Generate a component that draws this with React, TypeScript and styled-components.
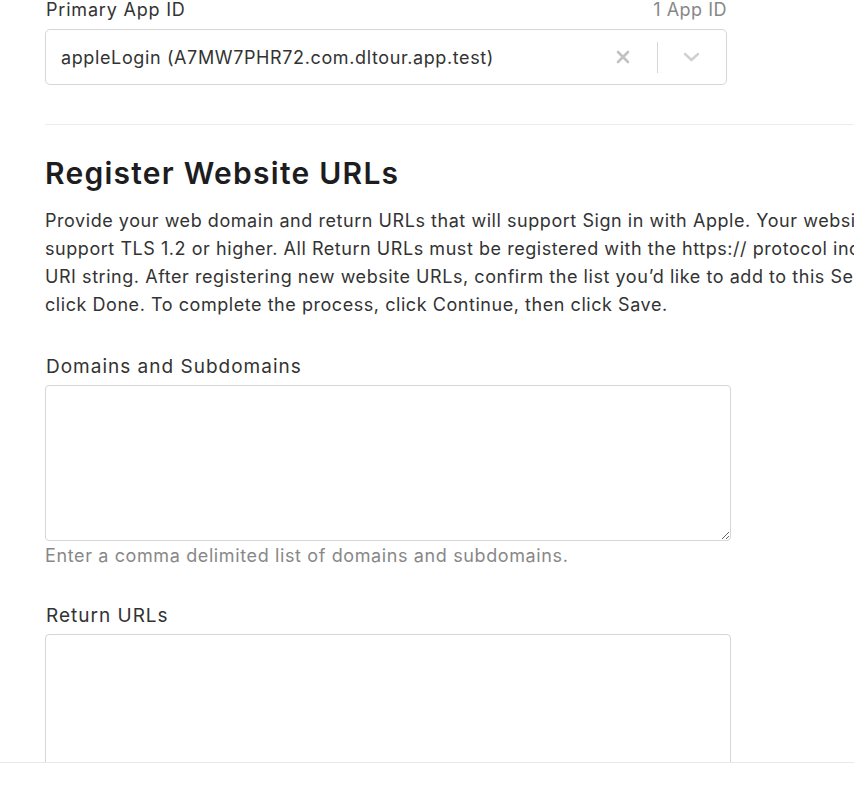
import React from "react";
import styled, { createGlobalStyle } from "styled-components";

const GlobalStyle = createGlobalStyle`
  html, body {
    margin: 0;
    padding: 0;
    background: #fff;
    overflow: hidden;
  }
  body {
    font-family: Inter, "Noto Sans", "Liberation Sans", sans-serif;
    color: #333;
  }
`;

const App = () => {
  return (
    <>
      <GlobalStyle />
      <Page>
        <Field>
          <LabelRow>
            <Label $size={18} $track={0.8}>Primary App ID</Label>
            <Count>1 App ID</Count>
          </LabelRow>
          <Select>
            <SelectValue>appleLogin (A7MW7PHR72.com.dltour.app.test)</SelectValue>
            <ClearIcon>
              <svg width="14" height="14" viewBox="0 0 14 14">
                <path d="M2 2 L12 12 M12 2 L2 12" stroke="#c2c2c2" strokeWidth="2.6" strokeLinecap="round" />
              </svg>
            </ClearIcon>
            <Separator />
            <ChevronIcon>
              <svg width="17" height="10" viewBox="0 0 17 10">
                <path d="M2 2 L8.5 8 L15 2" stroke="#d0d0d0" strokeWidth="2.4" fill="none" strokeLinecap="round" strokeLinejoin="round" />
              </svg>
            </ChevronIcon>
          </Select>
        </Field>

        <Divider />

        <Heading>Register Website URLs</Heading>
        <Intro>
          Provide your web domain and return URLs that will support Sign in with Apple. Your website must
          <br />
          support TLS 1.2 or higher. All Return URLs must be registered with the https:// protocol included in the
          <br />
          URI string. After registering new website URLs, confirm the list you’d like to add to this Services ID and
          <br />
          click Done. To complete the process, click Continue, then click Save.
        </Intro>

        <Field $top={38}>
          <Label>Domains and Subdomains</Label>
          <TextArea />
          <Hint>Enter a comma delimited list of domains and subdomains.</Hint>
        </Field>

        <Field $top={38}>
          <Label>Return URLs</Label>
          <TextArea />
        </Field>
      </Page>
      <BottomBar />
    </>
  );
};

export default App;

const Page = styled.div`
  padding-left: 45px;
  width: 1200px;
  display: flex;
  flex-direction: column;
`;

const Field = styled.div<{ $top?: number }>`
  width: 682px;
  display: flex;
  flex-direction: column;
  margin-top: ${({ $top }) => $top || 0}px;
`;

const LabelRow = styled.div`
  display: flex;
  justify-content: space-between;
  align-items: baseline;
`;

const Label = styled.div<{ $size?: number; $track?: number }>`
  font-size: ${({ $size }) => $size || 19}px;
  line-height: 20px;
  letter-spacing: ${({ $track }) => ($track === undefined ? 1 : $track)}px;
  color: #333;
  margin-bottom: 8px;
  padding-left: 1px;
`;

const Count = styled.div`
  font-size: 18px;
  line-height: 20px;
  letter-spacing: 0.5px;
  color: #888;
`;

const Select = styled.div`
  margin-top: 1px;
  height: 56px;
  box-sizing: border-box;
  border: 1px solid #d6d6d6;
  border-radius: 5px;
  display: flex;
  align-items: center;
  padding: 0 26px 0 15px;
`;

const SelectValue = styled.div`
  flex: 1;
  font-size: 18px;
  letter-spacing: 0.62px;
  color: #333;
`;

const ClearIcon = styled.span`
  display: flex;
  margin-right: 27px;
`;

const ChevronIcon = styled.span`
  display: flex;
  margin-left: 25px;
`;

const Separator = styled.span`
  width: 1px;
  height: 31px;
  background: #d6d6d6;
`;

const Divider = styled.div`
  margin-top: 39px;
  height: 1px;
  background: #ececec;
`;

const Heading = styled.h2`
  margin: 30px 0 0;
  font-size: 30px;
  line-height: 36px;
  font-weight: 600;
  color: #1d1d1f;
  letter-spacing: 1.25px;
`;

const Intro = styled.p`
  margin: 16px 0 0;
  font-size: 18px;
  line-height: 28px;
  letter-spacing: 0.55px;
  color: #333;
  white-space: nowrap;
`;

const TextArea = styled.textarea`
  display: block;
  width: 686px;
  height: 156px;
  box-sizing: border-box;
  border: 1px solid #d6d6d6;
  border-radius: 4px;
  resize: vertical;
  font-family: inherit;
  font-size: 17px;
  outline: none;
`;

const Hint = styled.div`
  margin-top: 3px;
  font-size: 18px;
  line-height: 24px;
  letter-spacing: 0.62px;
  color: #888;
`;

const BottomBar = styled.div`
  position: fixed;
  left: 0;
  right: 0;
  bottom: 0;
  height: 23px;
  background: #fff;
  border-top: 1px solid #e8e8e8;
`;
